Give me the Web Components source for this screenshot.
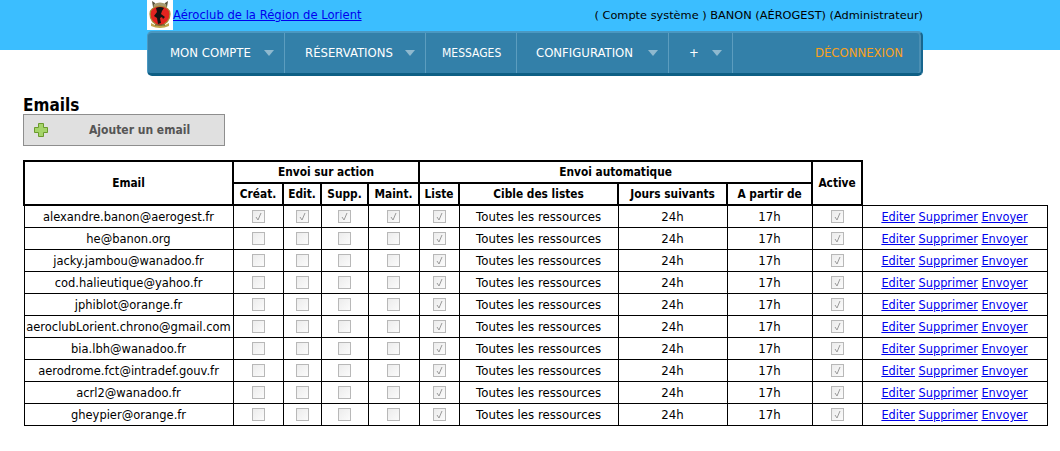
<!DOCTYPE html>
<html lang="fr">
<head>
<meta charset="utf-8">
<title>Emails</title>
<style>
  body { margin: 0; background: #fff; font-family: "DejaVu Sans", sans-serif; font-size: 11.6px; color: #000; }
</style>
</head>
<body>
<top-bar>
  <a slot="club" href="#">Aéroclub de la Région de Lorient</a>
  <span slot="user" style="font-size:11.35px">( Compte système ) BANON (AÉROGEST) (Administrateur)</span>
  <nav-item style="width:137px" arrow>MON COMPTE</nav-item>
  <nav-item style="width:141px;padding-left:20px" arrow>RÉSERVATIONS</nav-item>
  <nav-item style="width:91px;padding-left:16px;font-size:12px">MESSAGES</nav-item>
  <nav-item style="width:152px;padding-left:19px" arrow>CONFIGURATION</nav-item>
  <nav-item style="width:64px;padding-left:20px" arrow>+</nav-item>
  <nav-item style="flex:1" last>DÉCONNEXION</nav-item>
</top-bar>
<emails-page></emails-page>

<script>
class TopBar extends HTMLElement {
    constructor() {
        super();
        this.shadowDOM = this.attachShadow({ mode: "open" });
        this.shadowDOM.innerHTML = `
          <style>
            :host {
                display: block;
                height: 76px;
                background: linear-gradient(#3bbeff 50px, #fff 50px);
            }
            .inner { width: 776px; margin-left: 147px; }
            .head {
                display: flex;
                height: 31px;
                align-items: flex-start;
                justify-content: space-between;
                line-height: 31px;
            }
            .club { display: flex; align-items: flex-start; }
            .logo { display: block; width: 26px; height: 30px; background: #fff; }
            ::slotted(a) { color: #0000ee; }
            .nav {
                display: flex;
                box-sizing: border-box;
                height: 45px;
                background: #3380a9;
                border-top: 2px solid #4b98c1;
                border-left: 1px solid #4b98c1;
                border-right: 2px solid #17668f;
                border-bottom: 3px solid #0e5f85;
                border-radius: 5px;
                box-shadow: inset -2px 0 #4b8fb3;
            }
          </style>
          <div class="inner">
            <div class="head">
              <div class="club">
                <svg class="logo" viewBox="0 0 26 30">
                  <path d="M5 1l3 2 1 4H6zM21 1l-3 2-1 4h3z" fill="#55503a"/>
                  <path d="M7 4q6-3 12 0l1 4H6z" fill="#a89a70"/>
                  <path d="M3 14q0-7 10-8 10 1 10 8 0 9-10 12Q3 23 3 14z" fill="#e3241f" stroke="#a88f3a" stroke-width="1.2"/>
                  <path d="M9 8q4-2 8 0l-2 3-1 3 4 3-2 2-1-2-2 1 1 5-3 1-1-6-3-2 3-4z" fill="#141414"/>
                  <path d="M4 23q9 6 18 0l0 3q-9 4-18 0z" fill="#bfa54a"/>
                  <path d="M8 25h10" stroke="#5a4a20" stroke-width="1"/>
                </svg>
                <slot name="club"></slot>
              </div>
              <slot name="user"></slot>
            </div>
            <div class="nav"><slot></slot></div>
          </div>`;
    }
}
customElements.define("top-bar", TopBar);

class NavItem extends HTMLElement {
    constructor() {
        super();
        this.shadowDOM = this.attachShadow({ mode: "open" });
    }

    connectedCallback() {
        const arrow = this.hasAttribute("arrow")
            ? `<svg width="10" height="6" viewBox="0 0 10 6"><path d="M0 0h10L5 6z" fill="#8fb9cf"/></svg>` : "";
        this.shadowDOM.innerHTML = `
          <style>
            :host {
                display: flex;
                box-sizing: border-box;
                align-items: center;
                justify-content: space-between;
                padding: 0 10px 1px 22px;
                color: #fff;
                font-family: "DejaVu Sans Condensed", "DejaVu Sans", sans-serif;
                font-size: 13px;
                border-right: 1px solid #5c9dbf;
            }
            :host([last]) {
                justify-content: flex-end;
                padding-right: 18px;
                color: #f9a11b;
                border-right: 0;
            }
          </style>
          <span><slot></slot></span>${arrow}`;
    }
}
customElements.define("nav-item", NavItem);

class AddButton extends HTMLElement {
    constructor() {
        super();
        this.shadowDOM = this.attachShadow({ mode: "open" });
        this.shadowDOM.innerHTML = `
          <style>
            :host {
                display: flex;
                box-sizing: border-box;
                width: 202px;
                height: 32px;
                align-items: center;
                padding-left: 10px;
                background: #e0e0e0;
                border: 1px solid #8e8e8e;
                color: #555;
                font-family: "DejaVu Sans Condensed", "DejaVu Sans", sans-serif;
                font-weight: bold;
                font-size: 12px;
            }
            svg { flex: none; }
            span { margin-left: 41px; }
          </style>
          <svg width="14" height="14" viewBox="0 0 14 14">
            <path d="M4.5.5h5v4h4v5h-4v4h-5v-4h-4v-5h4z" fill="#a5d46a" stroke="#6b9a2c"/>
          </svg>
          <span><slot></slot></span>`;
    }
}
customElements.define("add-button", AddButton);

class MailCheck extends HTMLElement {
    constructor() {
        super();
        this.shadowDOM = this.attachShadow({ mode: "open" });
    }

    connectedCallback() {
        const tick = this.hasAttribute("checked")
            ? `<svg width="11" height="11" viewBox="0 0 11 11"><path d="M3 6l2 3 3-7" fill="none" stroke="#9a9a9a" stroke-width="1"/></svg>` : "";
        this.shadowDOM.innerHTML = `
          <style>
            :host {
                display: block;
                box-sizing: border-box;
                width: 13px;
                height: 13px;
                margin: auto;
                border: 1px solid #b8b8b8;
                background: linear-gradient(135deg, #ececec, #fbfbfb);
            }
            svg { display: block; }
          </style>${tick}`;
    }
}
customElements.define("mail-check", MailCheck);

class EmailsTable extends HTMLElement {

    constructor() {
        super();
        this.shadowDOM = this.attachShadow({ mode: "open" });
    }

    set mails(mails) {
        this._mails = mails;
        this.render();
    }

    render() {
        const box = (on) => `<td><mail-check ${on ? "checked" : ""}></mail-check></td>`;
        const rows = this._mails.map((mail, i) => `
          <tr>
            <td class="mail">${mail}</td>
            ${box(i == 0)}${box(i == 0)}${box(i == 0)}${box(i == 0)}
            ${box(true)}
            <td>Toutes les ressources</td>
            <td>24h</td>
            <td>17h</td>
            ${box(true)}
            <td class="links"><a href="#">Editer</a> <a href="#">Supprimer</a> <a href="#">Envoyer</a></td>
          </tr>`).join("");
        this.shadowDOM.innerHTML = `
          <style>
            :host { display: block; margin-top: 14px; }
            table {
                table-layout: fixed;
                width: 1023px;
                border-collapse: collapse;
                text-align: center;
            }
            th {
                height: 20px;
                padding: 0;
                border: 2px solid #000;
                font-family: "DejaVu Sans Condensed", "DejaVu Sans", sans-serif;
                font-size: 11.8px;
            }
            td {
                height: 21px;
                padding: 0;
                border: 1px solid #000;
                white-space: nowrap;
                font-size: 11.75px;
            }
            td.mail { font-size: 11.5px; }
            td.links {
                font-family: "DejaVu Sans Condensed", "DejaVu Sans", sans-serif;
                font-size: 12.6px;
            }
            a { color: #0000ee; }
          </style>
          <table>
            <colgroup>
              <col style="width:209px"><col style="width:50px"><col style="width:38px"><col style="width:47px"><col style="width:51px">
              <col style="width:40px"><col style="width:159px"><col style="width:109px"><col style="width:85px"><col style="width:50px"><col style="width:185px">
            </colgroup>
            <thead>
              <tr>
                <th rowspan="2">Email</th>
                <th colspan="4">Envoi sur action</th>
                <th colspan="4">Envoi automatique</th>
                <th rowspan="2">Active</th>
              </tr>
              <tr>
                <th>Créat.</th><th>Edit.</th><th>Supp.</th><th>Maint.</th>
                <th>Liste</th><th>Cible des listes</th><th>Jours suivants</th><th>A partir de</th>
              </tr>
            </thead>
            <tbody>${rows}</tbody>
          </table>`;
    }
}
customElements.define("emails-table", EmailsTable);

class EmailsPage extends HTMLElement {
    constructor() {
        super();
        this.shadowDOM = this.attachShadow({ mode: "open" });
        this.shadowDOM.innerHTML = `
          <style>
            :host { display: block; padding: 20px 0 0 23px; }
            h1 {
                margin: 0;
                font-family: "DejaVu Sans Condensed", "DejaVu Sans", sans-serif;
                font-size: 17px;
                line-height: 18px;
            }
          </style>
          <h1>Emails</h1>
          <add-button>Ajouter un email</add-button>
          <emails-table></emails-table>`;
        this.shadowDOM.querySelector("emails-table").mails = [
            "alexandre.banon@aerogest.fr", "he@banon.org", "jacky.jambou@wanadoo.fr",
            "cod.halieutique@yahoo.fr", "jphiblot@orange.fr", "aeroclubLorient.chrono@gmail.com",
            "bia.lbh@wanadoo.fr", "aerodrome.fct@intradef.gouv.fr", "acrl2@wanadoo.fr", "gheypier@orange.fr"
        ];
    }
}
customElements.define("emails-page", EmailsPage);
</script>
</body>
</html>
